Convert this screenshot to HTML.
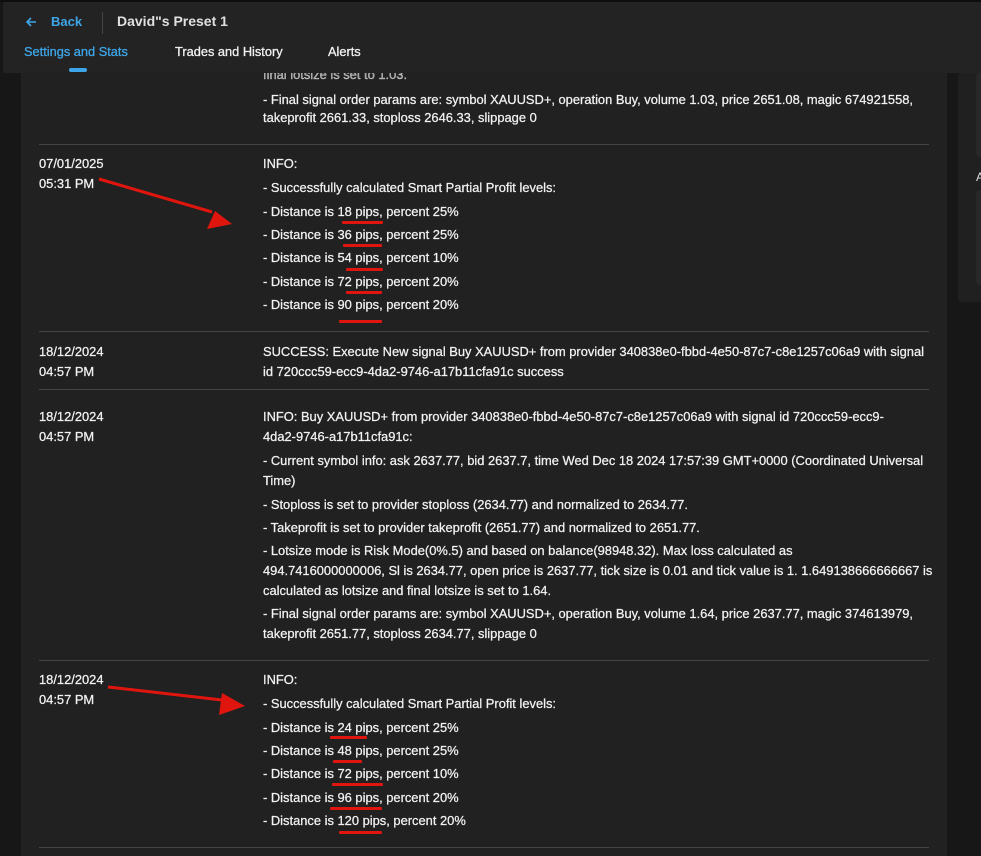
<!DOCTYPE html>
<html><head><style>
*{margin:0;padding:0;box-sizing:border-box}
body{width:981px;height:856px;overflow:hidden;background:#171717;font-family:"Liberation Sans",sans-serif;position:relative;color:#ececec}
.a{position:absolute;white-space:nowrap}
.t{position:absolute;white-space:nowrap;font-size:12.9px;color:#f2f2f2;line-height:16px;-webkit-text-stroke:0.25px #f2f2f2}
.sep{position:absolute;left:39px;width:890px;height:1px;background:#444}
.u{position:absolute;height:3px;background:#e0160e;border-radius:1px}
</style></head><body>
<div class="a" style="left:0;top:0;width:981px;height:2px;background:#0e0e0e"></div>
<div class="a" style="left:21px;top:73px;width:926px;height:783px;background:#212121"></div>
<div class="a" style="left:958px;top:73px;width:30px;height:229px;background:#202020;border-radius:4px"></div>
<div class="a" style="left:976px;top:73px;width:10px;height:84px;background:#282828;border-radius:4px"></div>
<div class="a" style="left:976px;top:190px;width:10px;height:95px;background:#282828;border-radius:4px"></div>
<div class="a" style="left:976px;top:170px;font-size:12px;color:#ddd">A</div>
<div class="t" style="left:263px;top:67px;color:#999">final lotsize is set to 1.03.</div>
<div class="a" style="left:3px;top:2px;width:978px;height:71px;background:#232323"></div>
<svg class="a" style="left:24px;top:16px" width="14" height="12" viewBox="0 0 14 12"><path d="M12 6H3M7 2L3 6l4 4" stroke="#3ea6e8" stroke-width="1.6" fill="none"/></svg>
<div class="a" style="left:51px;top:14px;font-size:13px;font-weight:bold;color:#3ea6e8">Back</div>
<div class="a" style="left:102px;top:12px;width:1px;height:22px;background:#444"></div>
<div class="a" style="left:117px;top:13px;font-size:14px;font-weight:bold;color:#e0e0e0">David"s Preset 1</div>
<div class="a" style="left:24px;top:44px;font-size:12.8px;color:#3ea6e8;-webkit-text-stroke:0.3px #3ea6e8">Settings and Stats</div>
<div class="a" style="left:175px;top:44px;font-size:12.8px;color:#f0f0f0;-webkit-text-stroke:0.3px #f0f0f0">Trades and History</div>
<div class="a" style="left:328px;top:44px;font-size:12.8px;color:#f0f0f0;-webkit-text-stroke:0.3px #f0f0f0">Alerts</div>
<div class="a" style="left:69px;top:68px;width:18px;height:4px;background:#3ea6e8;border-radius:2px"></div>

<div class="t" style="left:263px;top:92px">- Final signal order params are: symbol XAUUSD+, operation Buy, volume 1.03, price 2651.08, magic 674921558,</div>
<div class="t" style="left:263px;top:110px">takeprofit 2661.33, stoploss 2646.33, slippage 0</div>
<div class="sep" style="top:144px"></div>

<div class="t" style="left:39px;top:156px">07/01/2025</div>
<div class="t" style="left:39px;top:176px">05:31 PM</div>
<div class="t" style="left:263px;top:156px">INFO:</div>
<div class="t" style="left:263px;top:180px">- Successfully calculated Smart Partial Profit levels:</div>
<div class="t" style="left:263px;top:204px">- Distance is 18 pips, percent 25%</div>
<div class="t" style="left:263px;top:227px">- Distance is 36 pips, percent 25%</div>
<div class="t" style="left:263px;top:250px">- Distance is 54 pips, percent 10%</div>
<div class="t" style="left:263px;top:274px">- Distance is 72 pips, percent 20%</div>
<div class="t" style="left:263px;top:297px">- Distance is 90 pips, percent 20%</div>
<div class="u" style="left:342px;top:221px;width:41px"></div>
<div class="u" style="left:343px;top:244px;width:39px"></div>
<div class="u" style="left:346px;top:268px;width:37px"></div>
<div class="u" style="left:346px;top:291px;width:36px"></div>
<div class="u" style="left:339px;top:320px;width:43px"></div>
<div class="sep" style="top:331px"></div>

<div class="t" style="left:39px;top:344px">18/12/2024</div>
<div class="t" style="left:39px;top:364px">04:57 PM</div>
<div class="t" style="left:263px;top:344px">SUCCESS: Execute New signal Buy XAUUSD+ from provider 340838e0-fbbd-4e50-87c7-c8e1257c06a9 with signal</div>
<div class="t" style="left:263px;top:364px">id 720ccc59-ecc9-4da2-9746-a17b11cfa91c success</div>
<div class="sep" style="top:389px"></div>

<div class="t" style="left:39px;top:409px">18/12/2024</div>
<div class="t" style="left:39px;top:429px">04:57 PM</div>
<div class="t" style="left:263px;top:409px">INFO: Buy XAUUSD+ from provider 340838e0-fbbd-4e50-87c7-c8e1257c06a9 with signal id 720ccc59-ecc9-</div>
<div class="t" style="left:263px;top:429px">4da2-9746-a17b11cfa91c:</div>
<div class="t" style="left:263px;top:453px">- Current symbol info: ask 2637.77, bid 2637.7, time Wed Dec 18 2024 17:57:39 GMT+0000 (Coordinated Universal</div>
<div class="t" style="left:263px;top:473px">Time)</div>
<div class="t" style="left:263px;top:497px">- Stoploss is set to provider stoploss (2634.77) and normalized to 2634.77.</div>
<div class="t" style="left:263px;top:520px">- Takeprofit is set to provider takeprofit (2651.77) and normalized to 2651.77.</div>
<div class="t" style="left:263px;top:543px">- Lotsize mode is Risk Mode(0%.5) and based on balance(98948.32). Max loss calculated as</div>
<div class="t" style="left:263px;top:563px">494.7416000000006, Sl is 2634.77, open price is 2637.77, tick size is 0.01 and tick value is 1. 1.649138666666667 is</div>
<div class="t" style="left:263px;top:583px">calculated as lotsize and final lotsize is set to 1.64.</div>
<div class="t" style="left:263px;top:606px">- Final signal order params are: symbol XAUUSD+, operation Buy, volume 1.64, price 2637.77, magic 374613979,</div>
<div class="t" style="left:263px;top:626px">takeprofit 2651.77, stoploss 2634.77, slippage 0</div>
<div class="sep" style="top:660px"></div>

<div class="t" style="left:39px;top:672px">18/12/2024</div>
<div class="t" style="left:39px;top:692px">04:57 PM</div>
<div class="t" style="left:263px;top:672px">INFO:</div>
<div class="t" style="left:263px;top:696px">- Successfully calculated Smart Partial Profit levels:</div>
<div class="t" style="left:263px;top:720px">- Distance is 24 pips, percent 25%</div>
<div class="t" style="left:263px;top:743px">- Distance is 48 pips, percent 25%</div>
<div class="t" style="left:263px;top:766px">- Distance is 72 pips, percent 10%</div>
<div class="t" style="left:263px;top:790px">- Distance is 96 pips, percent 20%</div>
<div class="t" style="left:263px;top:813px">- Distance is 120 pips, percent 20%</div>
<div class="u" style="left:330px;top:736px;width:37px"></div>
<div class="u" style="left:333px;top:760px;width:29px"></div>
<div class="u" style="left:332px;top:783px;width:51px"></div>
<div class="u" style="left:330px;top:807px;width:52px"></div>
<div class="u" style="left:339px;top:831px;width:43px"></div>
<div class="sep" style="top:847px"></div>

<svg class="a" style="left:0;top:0" width="300" height="856">
<path d="M99 179 L212 212" stroke="#e0160e" stroke-width="3"/>
<polygon points="232,224 207,229 215,211" fill="#e0160e"/>
<path d="M108 687 L222 700" stroke="#e0160e" stroke-width="3"/>
<polygon points="245,706 219,715 222,693" fill="#e0160e"/>
</svg>
</body></html>
